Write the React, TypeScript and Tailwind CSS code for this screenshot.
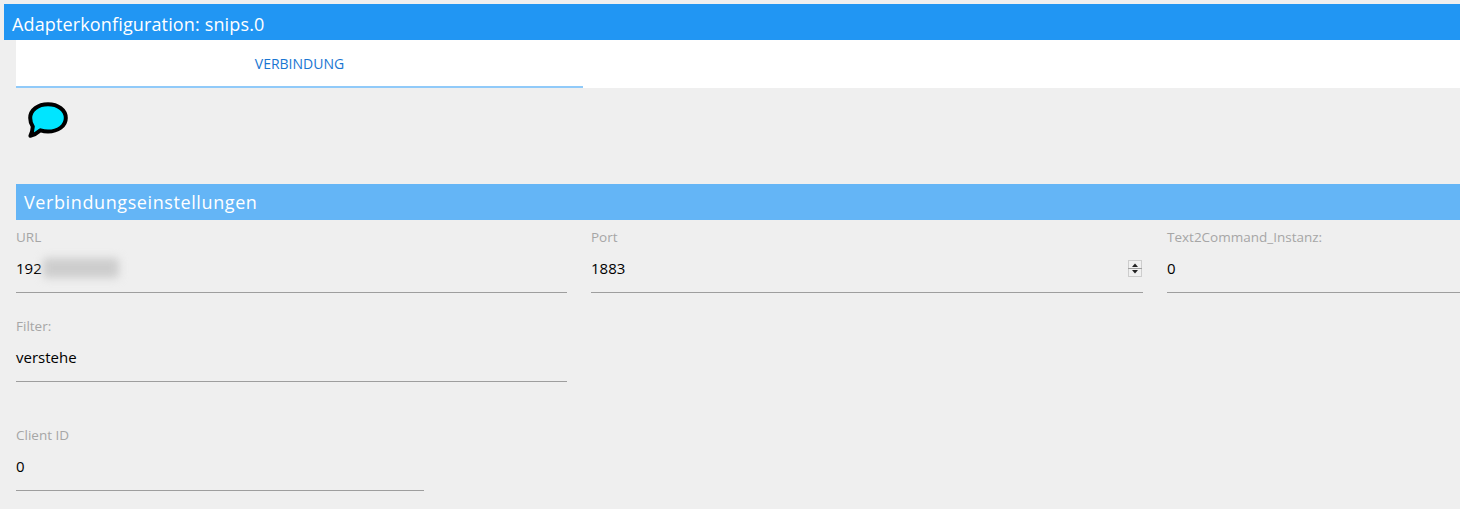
import React from 'react';

const Field: React.FC<{ label: string; value: string; blur?: boolean; spinner?: boolean }> = ({ label, value, blur, spinner }) => (
  <div className="h-[64px] border-b border-[#9e9e9e] box-content">
    <div className="h-[20px] text-[13.5px] leading-[18px] text-[#a6a6a6]">{label}</div>
    <div className="mt-[8px] flex items-center h-[24px] text-[15px] leading-[24px] text-black">
      <span>{value}</span>
      {blur && <span className="ml-[1px] w-[76px] h-[20px] bg-[#cdcdcd] rounded-sm blur-[4px]" />}
      {spinner && (
        <svg className="ml-auto mr-[1px]" width="14" height="17" viewBox="0 0 14 17">
          <rect x="0.5" y="0.5" width="13" height="16" fill="#f0f0f0" stroke="#cdcdcd" />
          <line x1="0" y1="8.5" x2="14" y2="8.5" stroke="#a0a0a0" />
          <path d="M7 3.5 L10 7 H4 Z" fill="#222" />
          <path d="M7 13.5 L10 10 H4 Z" fill="#222" />
        </svg>
      )}
    </div>
  </div>
);

export default function App() {
  return (
    <div className="h-[509px] w-[1460px] overflow-hidden bg-[#efefef] pt-[4px] pl-[4px] font-['Open_Sans',sans-serif]">
      <div className="h-[36px] bg-[#2196f3] pl-[8px] text-[18px] leading-[40px] text-white tracking-[0.14px]">
        Adapterkonfiguration: snips.0
      </div>

      <div className="pl-[12px]">
        <div className="h-[48px] bg-white">
          <div className="h-[48px] w-[567px] border-b-2 border-[#90caf9] text-center text-[14px] leading-[48px] text-[#1976d2]">
            VERBINDUNG
          </div>
        </div>

        <div className="h-[96px] pl-[11px] pt-[13px]">
          <svg width="42" height="38" viewBox="0 0 42 38">
            <path
              d="M21 3.2 C31 3.2 38.8 9 38.8 17 C38.8 25 31 30.5 21 30.5 C18.5 30.5 16 30.1 13.5 29.3 C11 31.5 7 34 3.4 34.8 C4.8 32 5.6 29 5.8 25.6 C4.2 23.3 3.2 20.3 3.2 17 C3.2 9 11 3.2 21 3.2 Z"
              fill="#00e5ff"
              stroke="#000"
              strokeWidth="4"
              strokeLinejoin="round"
            />
          </svg>
        </div>

        <div className="h-[36px] bg-[#64b5f6] pl-[8px] text-[18px] leading-[37px] text-white tracking-[0.6px]">
          Verbindungseinstellungen
        </div>

        <div className="mt-[8px] grid grid-cols-[551px_552px_320px] gap-x-[24px] gap-y-[24px]">
          <Field label="URL" value="192" blur />
          <Field label="Port" value="1883" spinner />
          <Field label="Text2Command_Instanz:" value="0" />
          <Field label="Filter:" value="verstehe" />
        </div>

        <div className="mt-[44px] w-[408px]">
          <Field label="Client ID" value="0" />
        </div>
      </div>
    </div>
  );
}
